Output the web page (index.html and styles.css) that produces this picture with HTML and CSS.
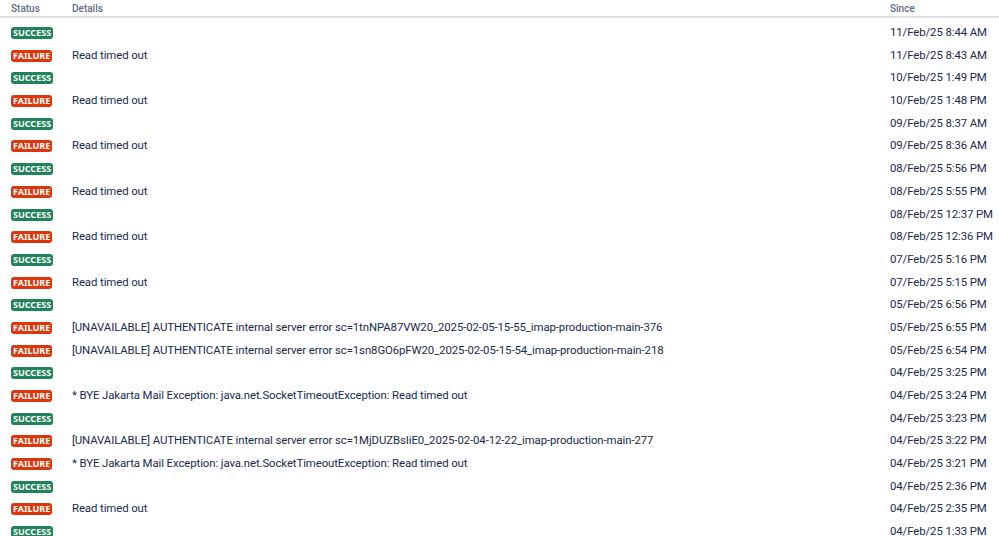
FILE: index.html
```html
<!DOCTYPE html>
<html lang="en">
<head>
  <meta charset="UTF-8" />
  <title>Connection history</title>
  <link rel="stylesheet" href="styles.css">
</head>
<body>
  <div class="log">
    <div class="row head">
      <div>Status</div>
      <div>Details</div>
      <div>Since</div>
    </div>
    <div class="rows">
      <div class="row"><div><span class="lozenge ok">Success</span></div><div></div><div>11/Feb/25 8:44 AM</div></div>
      <div class="row"><div><span class="lozenge fail">Failure</span></div><div>Read timed out</div><div>11/Feb/25 8:43 AM</div></div>
      <div class="row"><div><span class="lozenge ok">Success</span></div><div></div><div>10/Feb/25 1:49 PM</div></div>
      <div class="row"><div><span class="lozenge fail">Failure</span></div><div>Read timed out</div><div>10/Feb/25 1:48 PM</div></div>
      <div class="row"><div><span class="lozenge ok">Success</span></div><div></div><div>09/Feb/25 8:37 AM</div></div>
      <div class="row"><div><span class="lozenge fail">Failure</span></div><div>Read timed out</div><div>09/Feb/25 8:36 AM</div></div>
      <div class="row"><div><span class="lozenge ok">Success</span></div><div></div><div>08/Feb/25 5:56 PM</div></div>
      <div class="row"><div><span class="lozenge fail">Failure</span></div><div>Read timed out</div><div>08/Feb/25 5:55 PM</div></div>
      <div class="row"><div><span class="lozenge ok">Success</span></div><div></div><div>08/Feb/25 12:37 PM</div></div>
      <div class="row"><div><span class="lozenge fail">Failure</span></div><div>Read timed out</div><div>08/Feb/25 12:36 PM</div></div>
      <div class="row"><div><span class="lozenge ok">Success</span></div><div></div><div>07/Feb/25 5:16 PM</div></div>
      <div class="row"><div><span class="lozenge fail">Failure</span></div><div>Read timed out</div><div>07/Feb/25 5:15 PM</div></div>
      <div class="row"><div><span class="lozenge ok">Success</span></div><div></div><div>05/Feb/25 6:56 PM</div></div>
      <div class="row"><div><span class="lozenge fail">Failure</span></div><div>[UNAVAILABLE] AUTHENTICATE internal server error sc=1tnNPA87VW20_2025-02-05-15-55_imap-production-main-376</div><div>05/Feb/25 6:55 PM</div></div>
      <div class="row"><div><span class="lozenge fail">Failure</span></div><div>[UNAVAILABLE] AUTHENTICATE internal server error sc=1sn8GO6pFW20_2025-02-05-15-54_imap-production-main-218</div><div>05/Feb/25 6:54 PM</div></div>
      <div class="row"><div><span class="lozenge ok">Success</span></div><div></div><div>04/Feb/25 3:25 PM</div></div>
      <div class="row"><div><span class="lozenge fail">Failure</span></div><div>* BYE Jakarta Mail Exception: java.net.SocketTimeoutException: Read timed out</div><div>04/Feb/25 3:24 PM</div></div>
      <div class="row"><div><span class="lozenge ok">Success</span></div><div></div><div>04/Feb/25 3:23 PM</div></div>
      <div class="row"><div><span class="lozenge fail">Failure</span></div><div>[UNAVAILABLE] AUTHENTICATE internal server error sc=1MjDUZBsIiE0_2025-02-04-12-22_imap-production-main-277</div><div>04/Feb/25 3:22 PM</div></div>
      <div class="row"><div><span class="lozenge fail">Failure</span></div><div>* BYE Jakarta Mail Exception: java.net.SocketTimeoutException: Read timed out</div><div>04/Feb/25 3:21 PM</div></div>
      <div class="row"><div><span class="lozenge ok">Success</span></div><div></div><div>04/Feb/25 2:36 PM</div></div>
      <div class="row"><div><span class="lozenge fail">Failure</span></div><div>Read timed out</div><div>04/Feb/25 2:35 PM</div></div>
      <div class="row"><div><span class="lozenge ok">Success</span></div><div></div><div>04/Feb/25 1:33 PM</div></div>
    </div>
  </div>
</body>
</html>
```

FILE: styles.css
```css
body {
  margin: 0;
  background: #fff;
  font-family: Roboto, 'Noto Sans', sans-serif;
  color: #172b4d;
}

.log {
  width: 100%;
}

.rows {
  margin-top: 2.7px;
}

.row {
  display: grid;
  grid-template-columns: 72px 1fr 109px;
  align-items: center;
  height: 22.7px;
  font-size: 11.4px;
  letter-spacing: -0.1px;
  white-space: nowrap;
}

.row > div:first-child {
  padding-left: 11px;
}

.row.head {
  box-sizing: border-box;
  height: 18px;
  padding-top: 1px;
  border-bottom: 2px solid #dfe1e6;
  font-size: 10px;
  font-weight: 500;
  letter-spacing: 0;
  color: #5e6c84;
}

.lozenge {
  display: inline-block;
  padding: 0 2px;
  border-radius: 3px;
  font-family: 'Noto Sans', sans-serif;
  font-size: 9px;
  font-weight: 700;
  line-height: 12px;
  letter-spacing: 0;
  text-transform: uppercase;
  color: #fff;
  vertical-align: middle;
}

.lozenge.ok {
  background: #1f845a;
}

.lozenge.fail {
  background: #de350b;
}
```
